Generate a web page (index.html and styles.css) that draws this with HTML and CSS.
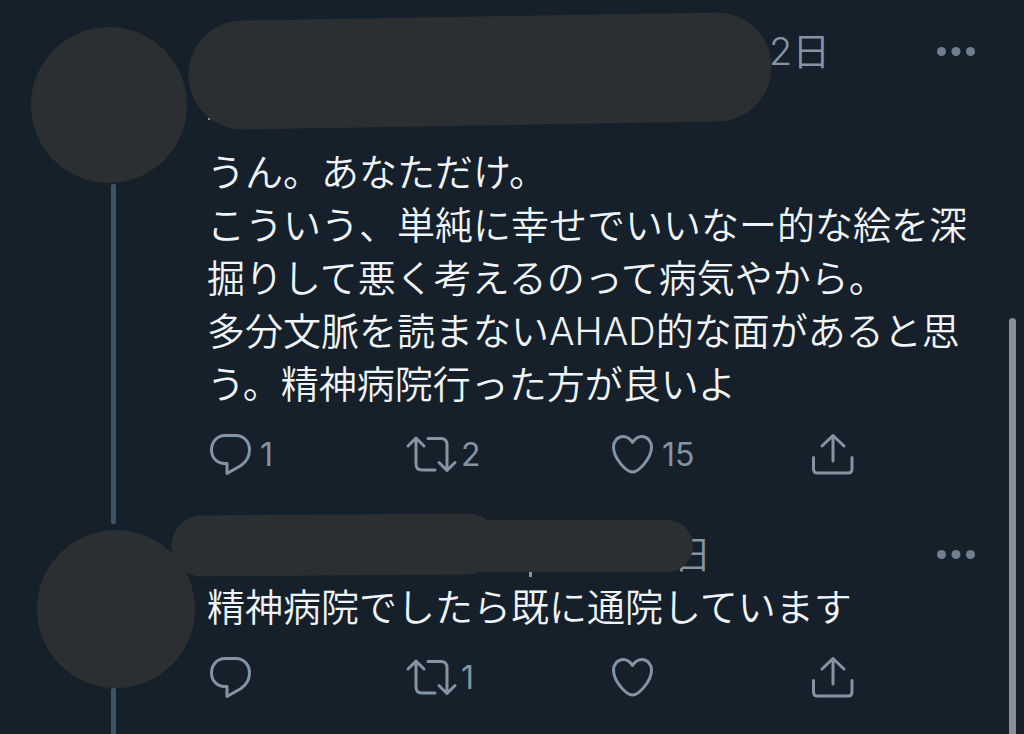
FILE: index.html
```html
<!DOCTYPE html>
<html lang="ja">
<head>
    <meta charset="UTF-8">
    <meta name="viewport" content="width=device-width, initial-scale=1.0">
    <title>スレッド</title>
    <link rel="stylesheet" href="styles.css">
</head>
<body>
    <!-- shared icons -->
    <svg class="sprite" aria-hidden="true">
        <symbol id="reply" viewBox="0 0 48 44">
            <path d="M18 2.5H29C37 2.5 42.5 9 42.5 17C42.5 24 39 29 34 32.5L20 40.5V30.5H17.5C10 30.5 4.5 24.5 4.5 17C4.5 9 10 2.5 18 2.5Z"/>
        </symbol>
        <symbol id="retweet" viewBox="0 0 48 44" overflow="visible">
            <path d="M0 13L8 5L16 13M8 5.5V31Q8 37 14 37H27M20 5.5H33Q39 5.5 39 12V37.5M31 29.5L39 37.5L47 29.5"/>
        </symbol>
        <symbol id="like" viewBox="0 0 48 44">
            <path d="M23.5 9.5C21 5.5 18 3.5 14 3.5C8.5 3.5 4.5 8.5 4.5 14C4.5 25 17 39 23.5 39C30 39 42.5 25 42.5 14C42.5 8.5 38.5 3.5 33 3.5C29 3.5 26 5.5 23.5 9.5Z"/>
        </symbol>
        <symbol id="share" viewBox="0 0 48 44">
            <path d="M12 13L23 2.5L34 13M23 2.5V28M3.5 24.5V36Q3.5 40 7.5 40H38Q42 40 42 36V24.5"/>
        </symbol>
        <symbol id="more" viewBox="0 0 38 10">
            <circle cx="4.5" cy="4.5" r="4.5"/>
            <circle cx="19" cy="4.5" r="4.5"/>
            <circle cx="33.5" cy="4.5" r="4.5"/>
        </symbol>
    </svg>

    <main class="thread">
        <article class="tweet">
            <div class="side">
                <div class="avatar"></div>
                <div class="line"></div>
            </div>
            <div class="content">
                <header class="head">
                    <div class="name"></div>
                    <time class="time">2日</time>
                    <button class="more" aria-label="その他"><svg><use href="#more"/></svg></button>
                </header>
                <div class="handle"></div>
                <div class="text">
                    <p>うん。あなただけ。</p>
                    <p>こういう、単純に幸せでいいなー的な絵を深掘りして悪く考えるのって病気やから。</p>
                    <p>多分文脈を読まないAHAD的な面があると思う。精神病院行った方が良いよ</p>
                </div>
                <div class="actions">
                    <button class="action" aria-label="返信"><svg><use href="#reply"/></svg><span>1</span></button>
                    <button class="action" aria-label="リツイート"><svg><use href="#retweet"/></svg><span>2</span></button>
                    <button class="action" aria-label="いいね"><svg><use href="#like"/></svg><span>15</span></button>
                    <button class="action" aria-label="共有"><svg><use href="#share"/></svg></button>
                </div>
            </div>
            <svg class="cover" viewBox="0 0 800 140" aria-hidden="true">
                <rect class="speck" x="208" y="118" width="2" height="2"/>
                <path stroke-width="109" d="M243 75L717 67"/>
            </svg>
        </article>

        <article class="tweet tweet-reply">
            <div class="side">
                <div class="avatar"></div>
                <div class="line"></div>
            </div>
            <div class="content">
                <header class="head">
                    <div class="name"></div>
                    <time class="time">2日</time>
                    <button class="more" aria-label="その他"><svg><use href="#more"/></svg></button>
                </header>
                <div class="text">
                    <p>精神病院でしたら既に通院しています</p>
                </div>
                <div class="actions">
                    <button class="action" aria-label="返信"><svg><use href="#reply"/></svg></button>
                    <button class="action" aria-label="リツイート"><svg><use href="#retweet"/></svg><span>1</span></button>
                    <button class="action" aria-label="いいね"><svg><use href="#like"/></svg></button>
                    <button class="action" aria-label="共有"><svg><use href="#share"/></svg></button>
                </div>
            </div>
            <svg class="cover" viewBox="0 0 800 140" aria-hidden="true">
                <rect class="speck" x="529" y="69" width="3" height="5"/>
                <path stroke-width="61" d="M202 43L468 41"/>
                <path stroke-width="52" d="M480 43H667"/>
            </svg>
        </article>
    </main>
    <div class="scrollbar"></div>
</body>
</html>
```

FILE: styles.css
```css
* {
    box-sizing: border-box;
}

body {
    margin: 0;
    background-color: #16202a;
    color: #f1f4f7;
    font-family: Inter, "Noto Sans CJK JP", sans-serif;
    font-size: 38px;
    font-weight: 350;
    line-height: 53px;
}

button {
    padding: 0;
    border: none;
    background: none;
    color: inherit;
    font: inherit;
    cursor: pointer;
}

.sprite {
    position: absolute;
    width: 0;
    height: 0;
}

.thread {
    display: flex;
    flex-direction: column;
    min-height: 100vh;
}

.tweet {
    position: relative;
    display: flex;
}

.tweet-reply {
    flex: 1;
}

/* avatar and the line that joins the tweets */
.side {
    display: flex;
    flex-direction: column;
    flex: none;
    width: 207px;
    padding-top: 27px;
}

.avatar {
    width: 156px;
    height: 156px;
    margin-left: 31px;
    border-radius: 50%;
    background-color: #2b2f32;
}

.tweet-reply .avatar {
    width: 158px;
    height: 158px;
    margin-left: 37px;
}

.line {
    flex: 1;
    width: 5px;
    margin: 1px 0 -21px 111px;
    border-radius: 2px;
    background-color: #3d5466;
}

.tweet-reply .line {
    margin-top: 0;
    margin-bottom: 0;
    border-radius: 2px 2px 0 0;
}

.content {
    flex: 1;
    padding: 25px 49px 26px 0;
}

.head {
    display: flex;
    align-items: center;
    color: #8494a2;
}

.name {
    width: 562px;
}

.tweet-reply .name {
    width: 443px;
}

.more {
    display: flex;
    margin-left: auto;
}

.more svg {
    width: 38px;
    height: 10px;
    fill: #6f7f8f;
}

.handle {
    height: 68px;
}

.text p {
    margin: 0;
}

.actions {
    display: grid;
    grid-template-columns: repeat(3, 1fr) auto;
    margin-top: 22px;
    padding-right: 117px;
}

.action {
    display: flex;
    align-items: center;
    gap: 5px;
    height: 44px;
    color: #8494a2;
    font-size: 32px;
    font-weight: 400;
    line-height: 42px;
}

.action svg {
    width: 48px;
    height: 44px;
    overflow: visible;
    fill: none;
    stroke: #8494a2;
    stroke-width: 3;
    stroke-linecap: round;
    stroke-linejoin: round;
}

/* hides the account names */
.cover {
    position: absolute;
    top: 0;
    left: 0;
    width: 800px;
    height: 140px;
    fill: none;
    stroke: #2b2f32;
    stroke-linecap: round;
    pointer-events: none;
}

.speck {
    fill: #8494a2;
    stroke: none;
}

.scrollbar {
    position: fixed;
    top: 318px;
    right: 8px;
    bottom: 0;
    width: 7px;
    border-radius: 4px 4px 0 0;
    background-color: #8b8e96;
}
```
